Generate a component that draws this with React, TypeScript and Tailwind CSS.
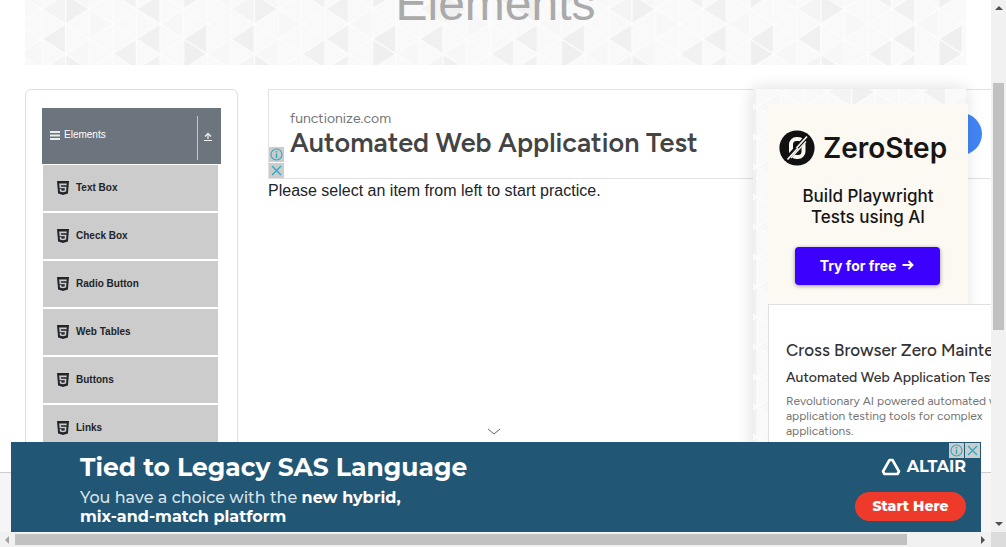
import { IoLogoHtml5 } from "react-icons/io5";
import type { ReactNode } from "react";

type Tri = [number, number, "l" | "r", string];

const COL = 23.6;
const HALF = 15;

/* Shaded cells of the lattice: column, row centre, direction, colour. */
const cells: Tri[] = [
  [1, 9, "r", "#f0f0f0"],
  [0, 9, "l", "#f4f4f4"],
  [4, 9, "l", "#f1f1f1"],
  [0, 39, "l", "#f0f0f0"],
  [4, 39, "l", "#f0f0f0"],
  [3, 54, "l", "#f1f1f1"],
  [6, 39, "l", "#efefef"],
  [6, 54, "r", "#efefef"],
  [2, 24, "r", "#f7f7f7"],
  [5, 24, "l", "#f7f7f7"],
  [7, 54, "l", "#f7f7f7"],
  [1, 54, "l", "#f7f7f7"],
];

function point(c: number, y: number) {
  return `${(c * COL).toFixed(1)},${y}`;
}

function Lattice({ id, shiftX, shiftY }: { id: string; shiftX: number; shiftY: number }) {
  const lines: ReactNode[] = [];
  for (let c = 0; c <= 8; c++) {
    lines.push(<path key={`v${c}`} d={`M${c * COL} 0V60`} />);
  }
  for (let k = -9; k <= 5; k++) {
    const y = 9 + k * 30;
    lines.push(<path key={`d${k}`} d={`M0 ${y}L${8 * COL} ${y + 120}`} />);
    lines.push(<path key={`u${k}`} d={`M0 ${y + 120}L${8 * COL} ${y}`} />);
  }
  return (
    <svg className="absolute inset-0 h-full w-full" aria-hidden="true">
      <defs>
        <pattern
          id={id}
          width={8 * COL}
          height="60"
          patternUnits="userSpaceOnUse"
          patternTransform={`translate(${shiftX} ${shiftY})`}
        >
          <rect width={8 * COL} height="60" fill="#f9f9f9" />
          {cells.map(([c, y, dir, fill], i) => {
            const tip = dir === "l" ? c : c + 1;
            const base = dir === "l" ? c + 1 : c;
            return [-60, 0, 60].map((dy) => (
              <polygon
                key={`${i}-${dy}`}
                fill={fill}
                points={`${point(tip, y + dy)} ${point(base, y - HALF + dy)} ${point(base, y + HALF + dy)}`}
              />
            ));
          })}
          <g stroke="#fdfdfd" strokeWidth="1.4" fill="none">
            {lines}
          </g>
        </pattern>
      </defs>
      <rect width="100%" height="100%" fill={`url(#${id})`} />
    </svg>
  );
}

function InfoIcon() {
  return (
    <svg viewBox="0 0 15 15" className="h-[15px] w-[15px]" fill="none" stroke="#28aac8" aria-hidden="true">
      <circle cx="7.5" cy="7.5" r="5.5" strokeWidth="1.1" />
      <path d="M7.5 6.5v4.5M7.5 4v1.4" strokeWidth="1.5" />
    </svg>
  );
}

function CrossIcon() {
  return (
    <svg viewBox="0 0 15 15" className="h-[15px] w-[15px]" fill="none" stroke="#28aac8" aria-hidden="true">
      <path d="M3 3l9 9M12 3l-9 9" strokeWidth="1.3" />
    </svg>
  );
}

function AdChoices({ vertical = false }: { vertical?: boolean }) {
  return (
    <div className={vertical ? "flex flex-col gap-px" : "flex gap-px"}>
      <button aria-label="Ad information" className="bg-[#cccccc]">
        <InfoIcon />
      </button>
      <button aria-label="Close ad" className="bg-[#cccccc]">
        <CrossIcon />
      </button>
    </div>
  );
}

const items = ["Text Box", "Check Box", "Radio Button", "Web Tables", "Buttons", "Links"];

function Sidebar() {
  return (
    <aside className="w-[213px] shrink-0 rounded-md border border-[#dfdfdf] px-4 pt-[18px]">
      <button className="flex h-14 w-[179px] items-center bg-[#6c757d] pr-[9px] pb-1 pl-2 text-[10px] text-white">
        <svg viewBox="0 0 10 9" className="mt-0.5 mr-1 h-[9px] w-[10px]" aria-hidden="true">
          <path d="M0 1h10M0 4.500h10M0 8h10" stroke="#e9ebec" strokeWidth="1.8" />
        </svg>
        Elements
        <span className="mt-2 ml-auto flex h-[44px] items-center border-l border-[#c4c8cb] pb-1 pl-1.5">
          <svg viewBox="0 0 8 9" className="h-[9px] w-2" fill="none" stroke="#eceeef" aria-hidden="true">
            <path d="M0 8.500h8M4 7V2" strokeWidth="1.2" />
            <path d="M1 4.500l3-3 3 3" strokeWidth="1.4" />
          </svg>
        </span>
      </button>
      <ul className="mt-px mr-0.5 ml-px flex flex-col gap-0.5">
        {items.map((name) => (
          <li key={name}>
            <a href="#item" className="flex h-[46px] w-[175px] items-center bg-[#cccccc] pb-0.5 pl-3 text-[10px] font-bold text-[#212529]">
              <IoLogoHtml5 className="mt-0.5 mr-[5px] h-4 w-4" />
              {name}
            </a>
          </li>
        ))}
      </ul>
    </aside>
  );
}

function WideAd() {
  return (
    <div className="flex h-[90px] w-[728px] items-center border border-[#e2e2e2] pr-[13px]">
      <div className="self-end">
        <AdChoices vertical />
      </div>
      <a href="#functionize" className="ml-1.5 block pt-0.5 whitespace-nowrap font-[Figtree,Lato,sans-serif]">
        <span className="block text-[14px] leading-4 text-[#757575]">functionize.com</span>
        <span className="block text-[27px] leading-8 font-semibold text-[#444444]">Automated Web Application Test</span>
      </a>
      <button aria-label="Open" className="ml-auto h-[42px] w-[42px] rounded-full bg-[#4285f4]" />
    </div>
  );
}

function ZeroStepAd() {
  return (
    <div className="flex h-[200px] w-[200px] flex-col items-center bg-[#fcf8f2] pt-6 font-[Inter,sans-serif] text-[#161616]">
      <div className="flex items-center gap-2 pr-2.5 text-[28px] leading-10 font-semibold">
        <svg viewBox="0 0 36 36" className="h-9 w-9" aria-hidden="true">
          <circle cx="18" cy="18" r="17.6" fill="#111" />
          <rect x="12" y="9" width="12.500" height="18" rx="5.500" fill="none" stroke="#fcf8f2" strokeWidth="4" />
          <path d="M7.500 30L29 6" stroke="#111" strokeWidth="5.4" />
          <path d="M8.500 29.500L19 18M17.500 18L28 6.500" stroke="#fcf8f2" strokeWidth="1.7" />
          <path d="M12 28L27 11.500" stroke="#fcf8f2" strokeWidth="1.3" />
        </svg>
        ZeroStep
      </div>
      <p className="mt-[18px] text-center text-[17px] leading-[21px] font-medium">
        Build Playwright
        <br />
        Tests using AI
      </p>
      <button className="mt-[19px] mr-0.5 flex h-[38px] w-[145px] items-center justify-center gap-1.5 rounded-[4px] bg-[#3c00ff] pb-0.5 text-[14px] font-bold text-white shadow-[0_1px_4px_rgba(0,0,0,0.4)]">
        Try for free
        <svg viewBox="0 0 12 12" className="h-3 w-3" fill="none" stroke="white" strokeWidth="1.9" aria-hidden="true">
          <path d="M0.500 6h10M6.500 2l4 4-4 4" />
        </svg>
      </button>
    </div>
  );
}

function CrossBrowserAd() {
  return (
    <div className="h-[250px] w-[300px] border border-[#e0e0e0] bg-white pt-[35px] pl-[17px] font-[Figtree,Lato,sans-serif]">
      <a href="#cross" className="block text-[17px] leading-5 font-medium whitespace-nowrap text-[#333]">
        Cross Browser Zero Maintenance
      </a>
      <p className="mt-2.5 text-[14px] leading-4 font-medium whitespace-nowrap text-[#333]">Automated Web Application Test</p>
      <p className="mt-2 text-[12px] leading-[15px] text-[#757575]">
        Revolutionary AI powered automated web
        <br />
        application testing tools for complex
        <br />
        applications.
      </p>
    </div>
  );
}

function Banner() {
  return (
    <div className="absolute inset-x-0 bottom-0 h-[60px] border-t border-[#cccccc] bg-[#f5f5f5]">
      <div className="absolute inset-x-[10px] bottom-0 ml-px flex h-[90px] justify-between bg-[#225675] pr-[15px] pl-[69px] text-white">
        <div className="pt-[11px] font-[Montserrat,'Open_Sans',sans-serif] whitespace-nowrap">
          <p className="text-[25px] leading-7 font-bold">Tied to Legacy SAS Language</p>
          <p className="mt-[7px] text-[16px] leading-[19px] font-medium text-[#d9e4ea]">
            You have a choice with the <b className="text-white">new hybrid,</b>
            <br />
            <b className="text-white">mix-and-match platform</b>
          </p>
        </div>
        <div className="flex flex-col items-end pt-4 font-[Montserrat,'Open_Sans',sans-serif]">
          <div className="flex items-center gap-1.5 text-[16px] leading-[18px] font-bold">
            <svg viewBox="0 0 20 18" className="h-[18px] w-5" fill="none" stroke="white" strokeWidth="2.6" strokeLinejoin="round" aria-hidden="true">
              <path d="M8.500 2h3l6.500 11.500-1.500 2.500H3.500L2 13.500z" />
            </svg>
            ALTAIR
          </div>
          <button className="mt-4 h-[29px] w-[111px] rounded-full bg-[#ee3a2b] text-[14px] font-extrabold">Start Here</button>
        </div>
        <div className="absolute top-px right-px">
          <AdChoices />
        </div>
      </div>
    </div>
  );
}

export default function App() {
  return (
    <div className="flex h-screen flex-col overflow-hidden bg-white font-['Liberation_Sans',Arial,sans-serif] text-[#212529]">
      <div className="flex min-h-0 flex-1">
        <main className="relative min-w-0 flex-1 overflow-hidden px-[25px]">
          <header className="relative flex h-[65px] items-end justify-center overflow-hidden pb-[37px]">
            <Lattice id="lattice-header" shiftX={17} shiftY={0} />
            <h1 className="relative text-[48px] leading-none text-[#aaaaaa]">Elements</h1>
          </header>
          <div className="mt-6 flex h-[500px]">
            <Sidebar />
            <section className="ml-[30px] w-0 flex-1">
              <WideAd />
              <p className="text-[16px] leading-6">Please select an item from left to start practice.</p>
            </section>
            <div className="relative w-[213px] shrink-0 pt-[15px] pl-[15px] shadow-[0_0_16px_rgba(0,0,0,0.14)]">
              <Lattice id="lattice-side" shiftX={75} shiftY={-6} />
              <div className="relative">
                <ZeroStepAd />
                <CrossBrowserAd />
              </div>
            </div>
          </div>
          <Banner />
          <button aria-label="Collapse ad" className="absolute bottom-24 left-1/2 -translate-x-1/2">
            <svg viewBox="0 0 12 8" className="mr-1 h-2 w-3" fill="none" stroke="#666" aria-hidden="true">
              <path d="M0 1l6 5 6-5" />
            </svg>
          </button>
        </main>
        <div className="flex w-[15px] flex-col items-center bg-[#f1f1f1]" aria-hidden="true">
          <div className="flex h-[83px] pt-1.5">
            <svg viewBox="0 0 8 4" className="h-1 w-2">
              <path d="M0 4h8L4 0z" fill="#505050" />
            </svg>
          </div>
          <div className="h-[247px] w-[11px] bg-[#c1c1c1]" />
          <svg viewBox="0 0 8 4" className="mt-auto mb-1.5 h-1 w-2">
            <path d="M0 0h8L4 4z" fill="#505050" />
          </svg>
        </div>
      </div>
      <div className="flex h-[15px] bg-[#f1f1f1]" aria-hidden="true">
        <div className="flex flex-1 items-center pr-1.5 pl-[5px]">
          <svg viewBox="0 0 4 8" className="h-2 w-1">
            <path d="M4 0v8L0 4z" fill="#a3a3a3" />
          </svg>
          <div className="ml-1.5 h-[11px] w-[91%] bg-[#c1c1c1]" />
          <svg viewBox="0 0 4 8" className="ml-auto h-2 w-1">
            <path d="M0 0v8l4-4z" fill="#505050" />
          </svg>
        </div>
        <div className="w-[15px] bg-[#dcdcdc]" />
      </div>
    </div>
  );
}
